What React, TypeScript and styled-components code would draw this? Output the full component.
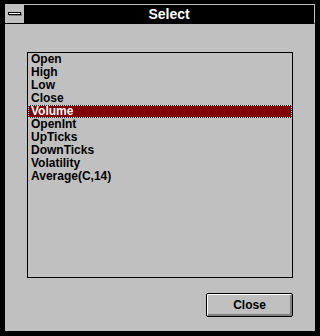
import React, { useState } from "react";
import styled, { createGlobalStyle } from "styled-components";

const GlobalStyle = createGlobalStyle`
  html, body {
    margin: 0;
    padding: 0;
    background: #000;
  }
  body {
    font-family: "Liberation Sans", Arial, sans-serif;
  }
`;

const Window = styled.div`
  width: 320px;
  height: 336px;
  box-sizing: border-box;
  background: #000;
  padding: 4px 5px 5px 5px;
  display: flex;
  flex-direction: column;
`;

const TitleBar = styled.div`
  display: flex;
  height: 20px;
  box-sizing: border-box;
  border-top: 1px solid #c0c0c0;
  border-right: 1px solid #c0c0c0;
  border-bottom: 1px solid #000;
  background: #000;
`;

const SysMenu = styled.div`
  width: 19px;
  height: 18px;
  background: #c0c0c0;
  display: flex;
`;

const Title = styled.div`
  flex: 1;
  color: #fff;
  font-weight: bold;
  font-size: 14px;
  line-height: 18px;
  text-align: center;
  user-select: none;
`;

const Client = styled.div`
  flex: 1;
  background: #c0c0c0;
  padding: 28px 0 0 22px;
  display: flex;
  flex-direction: column;
`;

const ListBox = styled.ul`
  list-style: none;
  margin: 0;
  padding: 0;
  width: 266px;
  height: 226px;
  box-sizing: border-box;
  border: 1px solid #000;
  background: #c0c0c0;
`;

const Item = styled.li<{ $selected?: boolean }>`
  height: 13px;
  line-height: 13px;
  padding-left: 3px;
  font-size: 12px;
  font-weight: bold;
  color: ${(p) => (p.$selected ? "#fff" : "#000")};
  background: ${(p) => (p.$selected ? "#800000" : "transparent")};
  outline: ${(p) => (p.$selected ? "1px dotted #7fffff" : "none")};
  outline-offset: -1px;
  cursor: default;
  white-space: nowrap;
`;

const Footer = styled.div`
  width: 266px;
  display: flex;
  justify-content: flex-end;
  margin-top: 15px;
`;

const Button = styled.button`
  width: 87px;
  height: 24px;
  box-sizing: border-box;
  padding: 0 0 1px 0;
  border: 1px solid #000;
  border-radius: 2px;
  background: #c0c0c0;
  box-shadow: inset 1px 1px 0 #fff, inset -2px -2px 0 #808080;
  font-family: "Liberation Sans", Arial, sans-serif;
  font-size: 12px;
  font-weight: bold;
  color: #000;
`;

const items = [
  "Open",
  "High",
  "Low",
  "Close",
  "Volume",
  "OpenInt",
  "UpTicks",
  "DownTicks",
  "Volatility",
  "Average(C,14)",
];

function SysMenuIcon() {
  return (
    <svg width="19" height="18" viewBox="0 0 19 18">
      <rect x="4" y="8" width="13" height="3" fill="#808080" />
      <rect x="3.5" y="7.5" width="12" height="2" fill="#fff" stroke="#000" />
    </svg>
  );
}

export default function App() {
  const [selected, setSelected] = useState(4);
  return (
    <>
      <GlobalStyle />
      <Window>
        <TitleBar>
          <SysMenu>
            <SysMenuIcon />
          </SysMenu>
          <Title>Select</Title>
        </TitleBar>
        <Client>
          <ListBox>
            {items.map((item, i) => (
              <Item key={item} $selected={i == selected} onClick={() => setSelected(i)}>
                {item}
              </Item>
            ))}
          </ListBox>
          <Footer>
            <Button>Close</Button>
          </Footer>
        </Client>
      </Window>
    </>
  );
}
